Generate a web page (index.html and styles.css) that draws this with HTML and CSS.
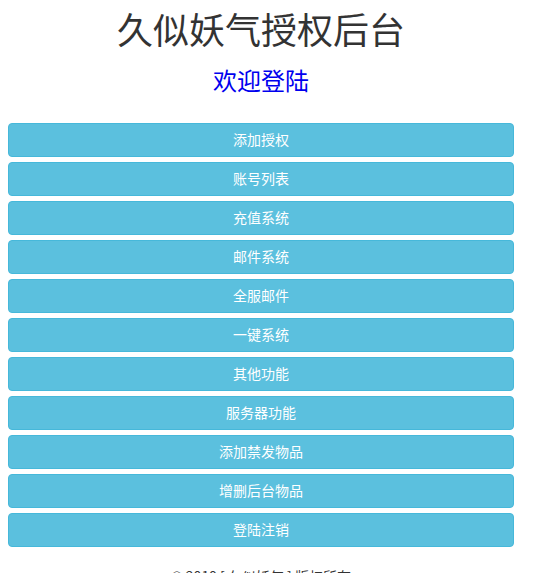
FILE: index.html
```html
<!DOCTYPE html>
<html lang="zh-CN">
<head>
<meta charset="utf-8">
<title>久似妖气授权后台</title>
<link rel="stylesheet" href="styles.css">
</head>
<body>
<div class="page">
  <h1 class="title">久似妖气授权后台</h1>
  <h2 class="subtitle">欢迎登陆</h2>
  <nav class="menu">
    <a class="btn" href="#">添加授权</a>
    <a class="btn" href="#">账号列表</a>
    <a class="btn" href="#">充值系统</a>
    <a class="btn" href="#">邮件系统</a>
    <a class="btn" href="#">全服邮件</a>
    <a class="btn" href="#">一键系统</a>
    <a class="btn" href="#">其他功能</a>
    <a class="btn" href="#">服务器功能</a>
    <a class="btn" href="#">添加禁发物品</a>
    <a class="btn" href="#">增删后台物品</a>
    <a class="btn" href="#">登陆注销</a>
  </nav>
  <p class="footer">© 2019 [ 久似妖气 ] 版权所有</p>
</div>
</body>
</html>
```

FILE: styles.css
```css
html, body {
  margin: 0;
  padding: 0;
  background: #fff;
}
body {
  font-family: "Noto Sans CJK SC", "Noto Sans", sans-serif;
  color: #333;
}
.page {
  width: 506px;
  padding: 0 8px;
}
.title {
  margin: 8px 0 0;
  font-size: 36px;
  line-height: 40px;
  font-weight: 400;
  text-align: center;
  color: #333;
}
.subtitle {
  margin: 17px 0 0;
  font-size: 24px;
  line-height: 30px;
  font-weight: 400;
  text-align: center;
  color: #0000ee;
}
.menu {
  margin-top: 28px;
  display: flex;
  flex-direction: column;
  gap: 5px;
}
.btn {
  display: block;
  box-sizing: border-box;
  height: 34px;
  line-height: 20px;
  padding: 5px 12px 7px;
  font-size: 14px;
  color: #fff;
  text-align: center;
  text-decoration: none;
  background: #5bc0de;
  border: 1px solid #46b8da;
  border-radius: 4px;
}
.footer {
  margin: 19px 0 0;
  font-size: 14px;
  line-height: 20px;
  text-align: center;
  color: #333;
}
```
